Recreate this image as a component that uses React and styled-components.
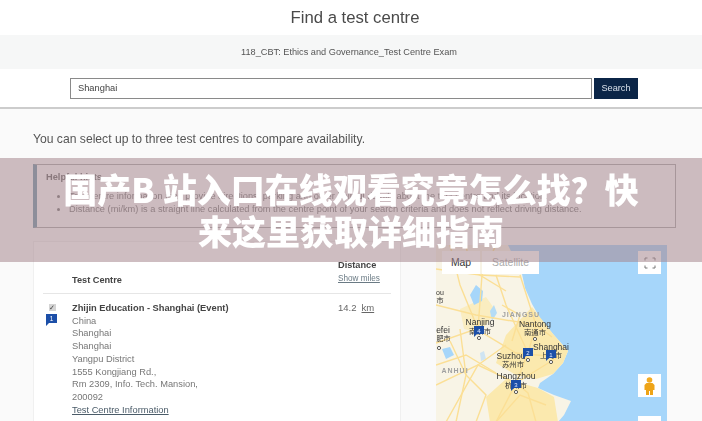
import React from 'react';
import styled, { createGlobalStyle } from 'styled-components';

const GlobalStyle = createGlobalStyle`
	html, body {
		margin: 0;
		padding: 0;
		height: 421px;
		overflow: hidden;
		background: #fafafa;
	}
`;

const Frame = styled.div`
	position: relative;
	width: 702px;
	height: 421px;
	overflow: hidden;
`;

const Page = styled.div`
	height: 421px;
	font-family: "Liberation Sans", Arial, sans-serif;
	color: #444;
	filter: blur(0.5px);
`;

const Title = styled.h1`
	height: 35px;
	margin: 0;
	padding-left: 8px;
	background: #fff;
	font-size: 16.7px;
	font-weight: 400;
	line-height: 35px;
	text-align: center;
	color: #4a4a4a;
`;

const ExamBand = styled.div`
	height: 34px;
	padding-right: 4px;
	background: #f6f7f7;
	font-size: 9.2px;
	line-height: 34px;
	text-align: center;
	color: #555;
`;

const SearchBar = styled.div`
	display: flex;
	gap: 2px;
	height: 40px;
	padding: 9px 0 0 70px;
	box-sizing: border-box;
	background: #fff;
	border-bottom: 2px solid #ccc;
`;

const SearchInput = styled.div`
	width: 522px;
	height: 21px;
	box-sizing: border-box;
	border: 1px solid #8a8a8a;
	padding-left: 7px;
	font-size: 9.3px;
	line-height: 19px;
	color: #444;
	background: #fff;
`;

const SearchButton = styled.div`
	width: 44px;
	height: 21px;
	background: #0b2547;
	color: #d8e0ea;
	font-size: 9.2px;
	line-height: 21px;
	text-align: center;
`;

const Content = styled.div`
	padding: 23px 26px 0 33px;
`;

const Intro = styled.p`
	margin: 0;
	font-size: 12.15px;
	line-height: 15px;
	color: #555;
`;

const HelpBox = styled.div`
	height: 64px;
	margin-top: 17px;
	box-sizing: border-box;
	border: 1px solid #a9a9a9;
	border-left: 4px solid #6f97a8;
	padding: 7px 9px 0;
	background: #fafafa;
	font-size: 9.25px;
	color: #777;

	b {
		display: block;
		margin-bottom: 8px;
		color: #666;
	}

	ul {
		margin: 0;
		padding-left: 23px;
	}

	li {
		line-height: 13px;
		white-space: nowrap;
	}
`;

const Results = styled.div`
	display: flex;
	margin-top: 13px;
`;

const TablePanel = styled.div`
	width: 368px;
	height: 190px;
	box-sizing: border-box;
	padding: 0 9px;
	background: #fff;
	border: 1px solid #f0f0f0;
`;

const TableHead = styled.div`
	display: flex;
	align-items: flex-end;
	height: 52px;
	box-sizing: border-box;
	padding: 0 0 8px 29px;
	border-bottom: 1px solid #e6e6e6;
	font-size: 9.2px;
	font-weight: 700;
	color: #444;
`;

const HeadName = styled.div`
	width: 266px;
`;

const HeadDistance = styled.div`
	line-height: 13px;

	a {
		display: block;
		font-size: 8.2px;
		font-weight: 400;
		color: #6a7a84;
		text-decoration: underline;
	}
`;

const Row = styled.div`
	display: flex;
	padding-top: 8px;
`;

const Marks = styled.div`
	display: flex;
	flex-direction: column;
	align-items: center;
	width: 29px;
	padding: 2px 15px 0 3px;
	box-sizing: border-box;
	gap: 3px;
`;

const CheckBox = styled.div`
	width: 7px;
	height: 7px;
	margin-left: 1px;
	background: #d4d4d4;
	color: #444;
	font-size: 7px;
	line-height: 7px;
	text-align: center;
`;

const Centre = styled.div`
	width: 266px;
	font-size: 9.3px;
	line-height: 12.7px;
	color: #777;

	b {
		display: block;
		font-size: 9.3px;
		color: #444;
	}

	a {
		color: #4a5b68;
		text-decoration: underline;
	}
`;

const RowDistance = styled.div`
	font-size: 9.5px;
	line-height: 12.7px;
	color: #666;

	u {
		margin-left: 5px;
	}
`;

const MapPanel = styled.div`
	position: relative;
	width: 231px;
	height: 177px;
	margin: 4px 0 0 35px;
	background: #a6d6fa;
	overflow: hidden;
`;

const MapCanvas = styled.svg`
	display: block;
`;

const MapTabs = styled.div`
	position: absolute;
	top: 6px;
	left: 6px;
	display: flex;
	gap: 2px;
	font-size: 10.4px;
	line-height: 23px;
`;

const MapTab = styled.div`
	width: ${(p) => p.$w}px;
	height: 23px;
	background: #fff;
	text-align: center;
	color: ${(p) => (p.$active ? '#333' : '#aaa')};
`;

const MapControl = styled.div`
	position: absolute;
	right: 6px;
	top: ${(p) => p.$top}px;
	display: flex;
	align-items: center;
	justify-content: center;
	width: 23px;
	height: 23px;
	background: #fff;
`;

const Banner = styled.div`
	position: absolute;
	top: 158px;
	left: 0;
	right: 0;
	display: flex;
	align-items: center;
	justify-content: center;
	height: 104px;
	padding: 0 60px;
	box-sizing: border-box;
	background: rgba(165, 135, 142, 0.55);
	color: #fff;
	font-family: "Noto Sans CJK SC", "Liberation Sans", sans-serif;
	font-size: 34px;
	font-weight: 900;
	line-height: 42px;
	text-align: center;
`;

const pins = [
	{ n: 1, x: 115, y: 105 },
	{ n: 2, x: 92, y: 103 },
	{ n: 3, x: 80, y: 135 },
	{ n: 4, x: 43, y: 81 },
];

const labels = [
	{ t: 'Nanjing', x: 44, y: 80, s: 8.5 },
	{ t: '南京市', x: 44, y: 89, s: 7.3 },
	{ t: 'Nantong', x: 99, y: 82, s: 8.5 },
	{ t: '南通市', x: 99, y: 90, s: 7.3 },
	{ t: 'Shanghai', x: 115, y: 105, s: 8.5 },
	{ t: '上海市', x: 115, y: 113, s: 7.3 },
	{ t: 'Suzhou', x: 75, y: 114, s: 8.5 },
	{ t: '苏州市', x: 77, y: 122, s: 7.3 },
	{ t: 'Hangzhou', x: 80, y: 134, s: 8.5 },
	{ t: '杭州市', x: 80, y: 143, s: 7.3 },
	{ t: 'efei', x: 7, y: 88, s: 8.5 },
	{ t: '肥市', x: 7.5, y: 96, s: 7 },
	{ t: 'ou', x: 4, y: 50, s: 7 },
	{ t: '市', x: 4, y: 58, s: 7 },
];

const roads = [
	'M0 98L40 84L80 108L122 112',
	'M42 84L46 30L60 0',
	'M80 138L92 108L100 80L84 30',
	'M10 177L42 120L80 138L60 177',
	'M0 60L40 70L100 80',
	'M80 138L122 112',
	'M14 0L24 40L42 84',
	'M0 140L42 120L70 100',
	'M60 30L70 60L92 108',
	'M100 80L116 92',
	'M20 177L30 130L14 96',
	'M60 177L84 150L110 160',
	'M44 30L84 32',
	'M0 24L44 30',
	'M24 84L30 130',
	'M100 177L92 148L80 138',
	'M0 120L30 110L60 128',
	'M30 0L34 24L70 46',
	'M40 177L50 150L30 130',
	'M66 60L84 70L76 96',
];

function MapDrawing() {
	return (
		<MapCanvas width="231" height="177" viewBox="0 0 231 177">
			<path d="M0 0H72L86 29L89 43L96 59L104 73L117 89L132 106L127 118L117 129L104 138L102 143L118 150L135 156L128 170L122 177H0Z" fill="#f8f4e6" />
			<path d="M96 62L117 89L132 106L127 118L117 129L100 134L80 130L60 118L70 90Z" fill="#fbe9ae" />
			<path d="M50 152L70 134L102 143L118 152L122 177H54Z" fill="#fbe9ae" />
			<path d="M24 64L50 52L60 66L44 88L28 84Z" fill="#faedc0" />
			<path d="M34 50L40 40L47 46L46 56L38 60Z" fill="#a6d6fa" />
			<path d="M54 66L58 60L61 68L56 76Z" fill="#b5dcf6" />
			<path d="M6 104L14 102L18 110L10 114Z" fill="#a6d6fa" />
			<path d="M44 108L48 106L50 114L45 116Z" fill="#cfe4f2" />
			<g fill="none" stroke="#fbdf95" strokeWidth="1.4">
				{roads.map((d) => (
					<path key={d} d={d} />
				))}
			</g>
			<g fontFamily="Liberation Sans, Noto Sans CJK SC, sans-serif" textAnchor="middle">
				<text x="85" y="72" fontSize="7" letterSpacing="1" fontWeight="700" fill="#a0a0a0">JIANGSU</text>
				<text x="19" y="128" fontSize="7" letterSpacing="1" fontWeight="700" fill="#a0a0a0">ANHUI</text>
				{labels.map((l) => (
					<text key={l.t} x={l.x} y={l.y} fontSize={l.s} fill="#333">{l.t}</text>
				))}
			</g>
			<circle cx="99" cy="94" r="1.6" fill="#fff" stroke="#333" strokeWidth="0.8" />
			<circle cx="3" cy="103" r="1.6" fill="#fff" stroke="#333" strokeWidth="0.8" />
			{pins.map((p) => (
				<g key={p.n}>
					<circle cx={p.x} cy={p.y + 12} r="1.6" fill="#fff" stroke="#333" strokeWidth="0.8" />
					<path d={`M${p.x - 5} ${p.y}h10v8h-7l-3 3z`} fill="#1c4fa8" />
					<text x={p.x} y={p.y + 6.5} fontSize="6" textAnchor="middle" fill="#dfe8ff" fontFamily="Liberation Sans, sans-serif">{p.n}</text>
				</g>
			))}
		</MapCanvas>
	);
}

export default function App() {
	return (
		<Frame>
			<GlobalStyle />
			<Page>
				<Title>Find a test centre</Title>
				<ExamBand>118_CBT: Ethics and Governance_Test Centre Exam</ExamBand>
				<SearchBar>
					<SearchInput>Shanghai</SearchInput>
					<SearchButton>Search</SearchButton>
				</SearchBar>
				<Content>
					<Intro>You can select up to three test centres to compare availability.</Intro>
					<HelpBox>
						<b>Helpful hints</b>
						<ul>
							<li>Test centre information may provide directions, parking and other helpful details about the test centre and its location.</li>
							<li>Distance (mi/km) is a straight line calculated from the centre point of your search criteria and does not reflect driving distance.</li>
						</ul>
					</HelpBox>
					<Results>
						<TablePanel>
							<TableHead>
								<HeadName>Test Centre</HeadName>
								<HeadDistance>
									Distance
									<a>Show miles</a>
								</HeadDistance>
							</TableHead>
							<Row>
								<Marks>
									<CheckBox>✓</CheckBox>
									<svg width="11" height="12" viewBox="0 0 11 12">
										<path d="M0 0h11v9H3l-3 3z" fill="#1c4fa8" />
										<text x="5.5" y="7" fontSize="6.5" textAnchor="middle" fill="#fff" fontFamily="Liberation Sans, sans-serif">1</text>
									</svg>
								</Marks>
								<Centre>
									<b>Zhijin Education - Shanghai (Event)</b>
									China<br />
									Shanghai<br />
									Shanghai<br />
									Yangpu District<br />
									1555 Kongjiang Rd.,<br />
									Rm 2309, Info. Tech. Mansion,<br />
									200092<br />
									<a>Test Centre Information</a>
								</Centre>
								<RowDistance>14.2<u>km</u></RowDistance>
							</Row>
						</TablePanel>
						<MapPanel>
							<MapDrawing />
							<MapTabs>
								<MapTab $w={38} $active>Map</MapTab>
								<MapTab $w={57}>Satellite</MapTab>
							</MapTabs>
							<MapControl $top={6}>
								<svg width="12" height="12" viewBox="0 0 12 12" fill="none" stroke="#777" strokeWidth="1">
									<path d="M1 3.5V1h2.5M8.5 1H11v2.5M11 8.5V11H8.5M3.5 11H1V8.5" />
								</svg>
							</MapControl>
							<MapControl $top={129}>
								<svg width="11" height="18" viewBox="0 0 11 18">
									<circle cx="5.5" cy="3" r="2.8" fill="#f2ab22" />
									<path d="M2.5 6h6l2 2v5H9v5H6V14H5v4H2v-5H.5V8z" fill="#eea417" />
								</svg>
							</MapControl>
							<MapControl $top={171} />
						</MapPanel>
					</Results>
				</Content>
			</Page>
			<Banner>国产B 站入口在线观看究竟怎么找？快来这里获取详细指南</Banner>
		</Frame>
	);
}
